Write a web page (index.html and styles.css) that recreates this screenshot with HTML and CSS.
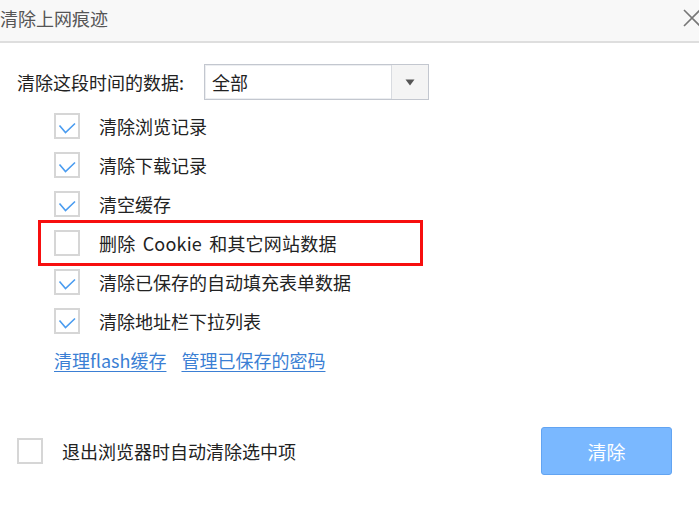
FILE: index.html
```html
<!DOCTYPE html>
<html lang="zh-CN">
<head>
<meta charset="utf-8">
<title>清除上网痕迹</title>
<link rel="stylesheet" href="styles.css">
</head>
<body>
<div class="dialog">
  <header class="titlebar">
    <span class="title">清除上网痕迹</span>
    <svg class="close" width="18" height="18" viewBox="0 0 18 18"><path d="M1 1L17 17M17 1L1 17" stroke="#777" stroke-width="1.6" fill="none"/></svg>
  </header>

  <div class="content">
    <div class="range">
      <span class="range-label">清除这段时间的数据:</span>
      <div class="select">
        <span class="select-value">全部</span>
        <span class="select-btn"><svg width="10" height="7" viewBox="0 0 10 7"><path d="M0.5 0.5H9.5L5 6.5Z" fill="#555"/></svg></span>
      </div>
    </div>

    <ul class="options">
      <li class="option"><span class="box checked"><svg viewBox="0 0 26 26" width="26" height="26"><path d="M5.5 12.5L11.5 19.5L21 10.5" stroke="#4a9cf0" stroke-width="1.6" fill="none"/></svg></span><span class="opt-label">清除浏览记录</span></li>
      <li class="option"><span class="box checked"><svg viewBox="0 0 26 26" width="26" height="26"><path d="M5.5 12.5L11.5 19.5L21 10.5" stroke="#4a9cf0" stroke-width="1.6" fill="none"/></svg></span><span class="opt-label">清除下载记录</span></li>
      <li class="option"><span class="box checked"><svg viewBox="0 0 26 26" width="26" height="26"><path d="M5.5 12.5L11.5 19.5L21 10.5" stroke="#4a9cf0" stroke-width="1.6" fill="none"/></svg></span><span class="opt-label">清空缓存</span></li>
      <li class="option highlighted"><span class="box"></span><span class="opt-label cookie-label">删除 Cookie 和其它网站数据</span><span class="red-mark"></span></li>
      <li class="option"><span class="box checked"><svg viewBox="0 0 26 26" width="26" height="26"><path d="M5.5 12.5L11.5 19.5L21 10.5" stroke="#4a9cf0" stroke-width="1.6" fill="none"/></svg></span><span class="opt-label">清除已保存的自动填充表单数据</span></li>
      <li class="option"><span class="box checked"><svg viewBox="0 0 26 26" width="26" height="26"><path d="M5.5 12.5L11.5 19.5L21 10.5" stroke="#4a9cf0" stroke-width="1.6" fill="none"/></svg></span><span class="opt-label">清除地址栏下拉列表</span></li>
    </ul>

    <div class="links">
      <a class="link" href="#">清理flash缓存</a>
      <a class="link" href="#">管理已保存的密码</a>
    </div>

    <div class="footer">
      <label class="auto-clear"><span class="box"></span><span class="auto-label">退出浏览器时自动清除选中项</span></label>
      <button class="clear-btn">清除</button>
    </div>
  </div>
</div>
</body>
</html>
```

FILE: styles.css
```css
html, body {
  margin: 0;
  padding: 0;
  background: #ffffff;
}
body {
  width: 699px;
  height: 508px;
  overflow: hidden;
  font-family: "Noto Sans CJK SC", "Noto Sans", sans-serif;
  color: #222;
}
.dialog {
  display: flex;
  flex-direction: column;
}
.titlebar {
  height: 41px;
  background: #f8f8f8;
  border-bottom: 2px solid #dedede;
  display: flex;
  align-items: center;
  justify-content: space-between;
}
.title {
  margin-left: 0;
  font-size: 18px;
  line-height: 24px;
  color: #555;
  margin-top: -6px;
}
.close {
  margin-right: -2px;
  margin-top: -6px;
}
.content {
  display: flex;
  flex-direction: column;
}
.range {
  margin-top: 21px;
  display: flex;
  align-items: center;
  padding-left: 17px;
}
.range-label {
  font-size: 18px;
  line-height: 24px;
  width: 187px;
}
.select {
  width: 223px;
  height: 34px;
  border: 1px solid #c3c7cf;
  box-shadow: inset 0 0 0 1px #eceef1;
  display: flex;
  align-items: stretch;
}
.select-value {
  flex: 1;
  font-size: 18px;
  line-height: 34px;
  padding-left: 7px;
  color: #222;
}
.select-btn {
  width: 36px;
  border-left: 1px solid #d8dbe0;
  background: #f4f4f4;
  display: flex;
  align-items: center;
  justify-content: center;
}
.options {
  list-style: none;
  margin: 13px 0 0 0;
  padding: 0 0 0 54px;
  display: flex;
  flex-direction: column;
  gap: 13px;
}
.option {
  display: flex;
  align-items: center;
  height: 26px;
  position: relative;
}
.box {
  width: 22px;
  height: 22px;
  border: 2px solid #d6d6d6;
  background: #fff;
  flex: none;
  position: relative;
  display: block;
}
.box svg {
  position: absolute;
  left: -2px;
  top: -2px;
}
.opt-label {
  margin-left: 19px;
  font-size: 18px;
  line-height: 24px;
  letter-spacing: 0;
}
.cookie-label {
  word-spacing: 3px;
  letter-spacing: 0.2px;
}
.red-mark {
  position: absolute;
  left: -16px;
  top: -10px;
  width: 379px;
  height: 40px;
  border: 3px solid #f70f0f;
  pointer-events: none;
}
.links {
  margin-top: 16px;
  padding-left: 54px;
  display: flex;
  gap: 15px;
}
.link {
  font-size: 18px;
  line-height: 20px;
  color: #3b7fd4;
  text-decoration: underline;
  text-underline-offset: 3px;
}
.footer {
  margin-top: 57px;
  display: flex;
  align-items: center;
  justify-content: space-between;
  padding: 0 27px 0 17px;
}
.auto-clear {
  display: flex;
  align-items: center;
}
.auto-label {
  margin-left: 19px;
  font-size: 18px;
  line-height: 24px;
  letter-spacing: 0;
}
.clear-btn {
  width: 131px;
  height: 48px;
  background: #7ab8ff;
  border: 1px solid #62a4f2;
  border-radius: 3px;
  color: #fff;
  font-family: "Noto Sans CJK SC", sans-serif;
  font-size: 19px;
  padding: 0;
}
```
